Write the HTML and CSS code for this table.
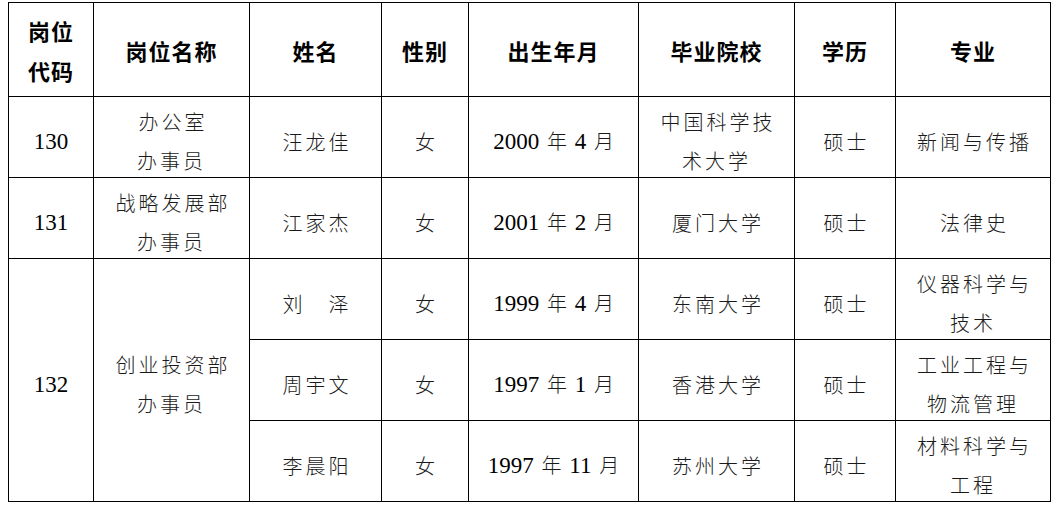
FILE: index.html
```html
<!DOCTYPE html>
<html lang="zh-CN">
<head>
<meta charset="utf-8">
<title>岗位表</title>
<link rel="stylesheet" href="styles.css">
</head>
<body>
<table class="tbl">
  <colgroup>
    <col class="c1"><col class="c2"><col class="c3"><col class="c4">
    <col class="c5"><col class="c6"><col class="c7"><col class="c8">
  </colgroup>
  <thead>
    <tr class="head">
      <th>岗位<br>代码</th>
      <th>岗位名称</th>
      <th>姓名</th>
      <th>性别</th>
      <th>出生年月</th>
      <th>毕业院校</th>
      <th>学历</th>
      <th>专业</th>
    </tr>
  </thead>
  <tbody>
    <tr>
      <td class="num"><div class="t">130</div></td>
      <td class="cj"><div class="t">办公室<br>办事员</div></td>
      <td class="cj"><div class="t">汪龙佳</div></td>
      <td class="cj"><div class="t">女</div></td>
      <td class="date"><div class="t">2000 <span class="u">年</span> 4 <span class="u">月</span></div></td>
      <td class="cj"><div class="t">中国科学技<br>术大学</div></td>
      <td class="cj"><div class="t">硕士</div></td>
      <td class="cj"><div class="t">新闻与传播</div></td>
    </tr>
    <tr>
      <td class="num"><div class="t">131</div></td>
      <td class="cj"><div class="t">战略发展部<br>办事员</div></td>
      <td class="cj"><div class="t">江家杰</div></td>
      <td class="cj"><div class="t">女</div></td>
      <td class="date"><div class="t">2001 <span class="u">年</span> 2 <span class="u">月</span></div></td>
      <td class="cj"><div class="t">厦门大学</div></td>
      <td class="cj"><div class="t">硕士</div></td>
      <td class="cj"><div class="t">法律史</div></td>
    </tr>
    <tr>
      <td class="num" rowspan="3"><div class="t">132</div></td>
      <td class="cj" rowspan="3"><div class="t">创业投资部<br>办事员</div></td>
      <td class="cj"><div class="t">刘　泽</div></td>
      <td class="cj"><div class="t">女</div></td>
      <td class="date"><div class="t">1999 <span class="u">年</span> 4 <span class="u">月</span></div></td>
      <td class="cj"><div class="t">东南大学</div></td>
      <td class="cj"><div class="t">硕士</div></td>
      <td class="cj"><div class="t">仪器科学与<br>技术</div></td>
    </tr>
    <tr>
      <td class="cj"><div class="t">周宇文</div></td>
      <td class="cj"><div class="t">女</div></td>
      <td class="date"><div class="t">1997 <span class="u">年</span> 1 <span class="u">月</span></div></td>
      <td class="cj"><div class="t">香港大学</div></td>
      <td class="cj"><div class="t">硕士</div></td>
      <td class="cj"><div class="t">工业工程与<br>物流管理</div></td>
    </tr>
    <tr>
      <td class="cj"><div class="t">李晨阳</div></td>
      <td class="cj"><div class="t">女</div></td>
      <td class="date"><div class="t">1997 <span class="u">年</span> 11 <span class="u">月</span></div></td>
      <td class="cj"><div class="t">苏州大学</div></td>
      <td class="cj"><div class="t">硕士</div></td>
      <td class="cj"><div class="t">材料科学与<br>工程</div></td>
    </tr>
  </tbody>
</table>
</body>
</html>
```

FILE: styles.css
```css
html, body {
  background: #ffffff;
}
body {
  margin: 2px 0 0 8px;
  font-family: "Liberation Serif", "Noto Sans CJK SC", serif;
  color: #111111;
}
.tbl {
  border-collapse: collapse;
  table-layout: fixed;
  width: 1042px;
}
.c1 { width: 85px; }
.c2 { width: 156px; }
.c3 { width: 132px; }
.c4 { width: 87px; }
.c5 { width: 170px; }
.c6 { width: 156px; }
.c7 { width: 101px; }
.c8 { width: 155px; }
.tbl th, .tbl td {
  border: 1.5px solid #000000;
  padding: 0;
  text-align: center;
  vertical-align: middle;
}
.head th {
  height: 93px;
  line-height: 40px;
  font-family: "Noto Sans CJK SC", sans-serif;
  font-weight: 700;
  font-size: 22px;
  letter-spacing: 1px;
  color: #000000;
}
.tbl tbody tr {
  height: 81px;
}
.tbl td {
  font-size: 20px;
  line-height: 39px;
}
.t {
  margin: 4px 0 -4px;
}
.num {
  font-family: "Liberation Serif", serif;
  color: #000000;
}
.num .t {
  font-size: 23px;
}
.date {
  font-family: "Liberation Serif", serif;
  color: #000000;
}
.date .t {
  font-size: 23px;
  word-spacing: 2px;
}
.u {
  font-family: "Noto Sans CJK SC", sans-serif;
  font-weight: 300;
  font-size: 20px;
  color: #1a1a1a;
}
.cj {
  font-family: "Noto Sans CJK SC", sans-serif;
  font-weight: 300;
  letter-spacing: 3px;
  text-indent: 3px;
  color: #1a1a1a;
}
```
